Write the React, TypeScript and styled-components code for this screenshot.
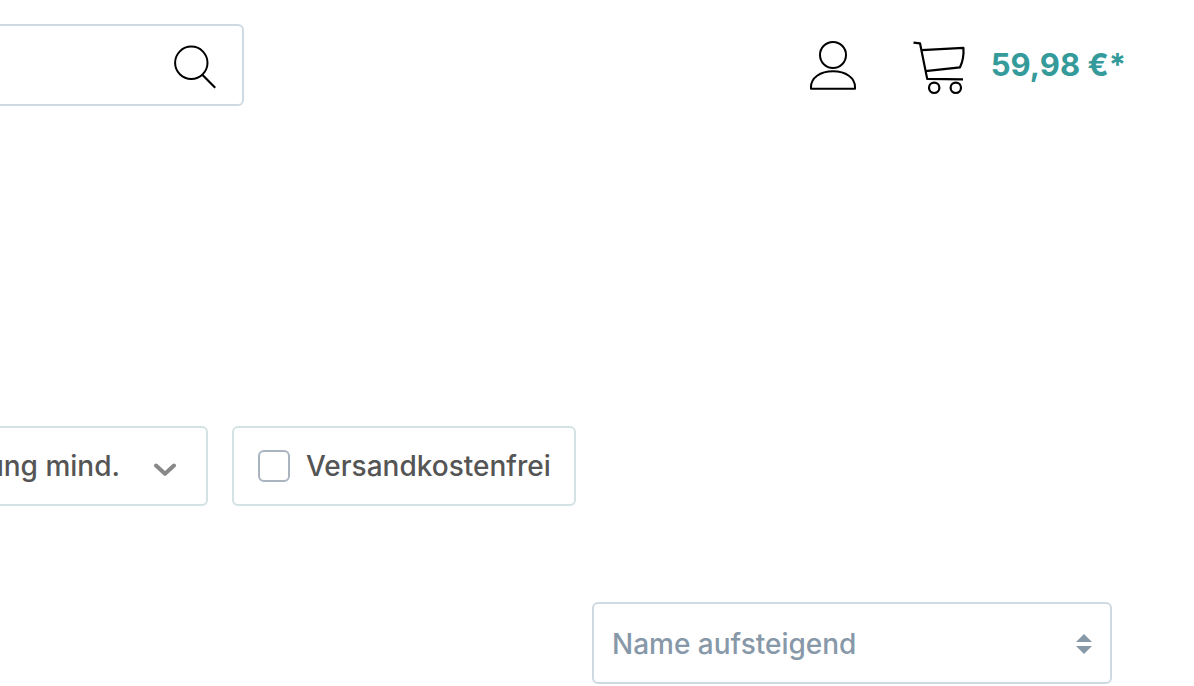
import React from "react";
import styled, { createGlobalStyle } from "styled-components";

const GlobalStyle = createGlobalStyle`
  *, *::before, *::after { box-sizing: border-box; }
  body {
    margin: 0;
    background: #fff;
    color: #555;
    font-family: Inter, "Liberation Sans", sans-serif;
    font-size: 28px;
    font-weight: 500;
    line-height: 40px;
  }
  button, input, select { font: inherit; color: inherit; }
`;

const Page = styled.div`
  overflow-x: hidden;
`;

const Header = styled.header`
  display: flex;
  justify-content: space-between;
  align-items: center;
  padding: 24px 68px 0 0;
`;

const SearchForm = styled.form`
  display: flex;
  align-items: center;
  width: 244px;
  height: 82px;
  border: 2px solid #cfd9e2;
  border-left: 0;
  border-radius: 0 6px 6px 0;
`;

const SearchInput = styled.input`
  flex: 1;
  min-width: 0;
  height: 100%;
  padding: 0 16px;
  border: 0;
  background: transparent;
  outline: none;
`;

const IconButton = styled.button`
  display: flex;
  padding: 0;
  border: 0;
  background: transparent;
  color: #000;
  cursor: pointer;
`;

const SearchButton = styled(IconButton)`
  margin-right: 24px;
`;

const Actions = styled.nav`
  display: flex;
  align-items: center;
  gap: 54px;
`;

const ActionLink = styled.a`
  display: flex;
  align-items: center;
  gap: 24px;
  color: #000;
  text-decoration: none;
`;

const Price = styled.span`
  color: #349a9a;
  font-size: 31px;
  font-weight: 700;
  white-space: nowrap;
`;

const Filters = styled.section`
  display: flex;
  gap: 24px;
  padding-top: 320px;
`;

const FilterButton = styled.button`
  display: flex;
  justify-content: flex-end;
  align-items: center;
  gap: 32px;
  width: 208px;
  height: 80px;
  padding: 0 30px 0 0;
  overflow: hidden;
  border: 2px solid #d3e2e2;
  border-left: 0;
  border-radius: 0 6px 6px 0;
  background: #fff;
  white-space: nowrap;
  cursor: pointer;

  svg { flex: none; }
`;

const FilterCheck = styled.label`
  display: flex;
  align-items: center;
  gap: 16px;
  height: 80px;
  padding: 0 23px 0 24px;
  border: 2px solid #d3e2e2;
  border-radius: 6px;
  cursor: pointer;
`;

const Checkbox = styled.input`
  appearance: none;
  width: 32px;
  height: 32px;
  margin: 0;
  border: 2px solid #a9b4c0;
  border-radius: 6px;
  background: #fff;
  &:checked { background: #349a9a; }
`;

const SortBar = styled.section`
  display: flex;
  justify-content: flex-end;
  padding: 96px 82px 0 0;
`;

const SelectWrap = styled.div`
  position: relative;
  width: 520px;
  color: #8798a9;
`;

const SortSelect = styled.select`
  appearance: none;
  display: block;
  width: 100%;
  height: 82px;
  padding: 2px 56px 0 18px;
  border: 2px solid #cfd9e2;
  border-radius: 6px;
  background: #fff;
`;

const SelectArrows = styled.svg`
  position: absolute;
  top: 32px;
  right: 20px;
  pointer-events: none;
`;

const SearchIcon = () => (
  <svg width="48" height="48" viewBox="0 0 48 48" fill="none" stroke="currentColor" strokeWidth="2" aria-hidden="true">
    <circle cx="21.3" cy="21.8" r="16.2" />
    <path d="M32.3 33.7 45.2 46.7" strokeWidth="2.2" />
  </svg>
);

const UserIcon = () => (
  <svg width="48" height="56" viewBox="0 0 48 56" fill="none" stroke="currentColor" strokeWidth="2" aria-hidden="true">
    <circle cx="24" cy="18" r="13" />
    <path d="M2 51.7V50C2 41 11 34.3 24 34.3S46 41 46 50V51.7Z" strokeLinejoin="round" />
  </svg>
);

const CartIcon = () => (
  <svg width="56" height="60" viewBox="0 -2 56 60" fill="none" stroke="currentColor" strokeWidth="2.2" strokeLinejoin="round" aria-hidden="true">
    <path d="M2.5 5.6 9 6.3 16.2 41.9 52 42.4" />
    <path d="M10.6 13.2 52.4 10.8C53 18 51.5 25 49 30.3L14.4 34.2" />
    <circle cx="23.2" cy="50.8" r="5.2" />
    <circle cx="44.8" cy="50.8" r="5.2" />
  </svg>
);

const ChevronIcon = () => (
  <svg width="24" height="24" viewBox="0 0 24 24" fill="none" stroke="#888" strokeWidth="4" strokeLinecap="round" strokeLinejoin="round" aria-hidden="true">
    <path d="M4 11.5 13 19.8 22 11.5" />
  </svg>
);

export default function App() {
  return (
    <Page>
      <GlobalStyle />
      <Header>
        <SearchForm role="search" onSubmit={(e) => e.preventDefault()}>
          <SearchInput type="search" aria-label="Suche" />
          <SearchButton type="submit" aria-label="Suchen">
            <SearchIcon />
          </SearchButton>
        </SearchForm>
        <Actions>
          <ActionLink href="#konto" aria-label="Mein Konto">
            <UserIcon />
          </ActionLink>
          <ActionLink href="#warenkorb">
            <CartIcon />
            <Price>59,98 €*</Price>
          </ActionLink>
        </Actions>
      </Header>
      <main>
        <Filters>
          <FilterButton type="button">
            ung mind.
            <ChevronIcon />
          </FilterButton>
          <FilterCheck>
            <Checkbox type="checkbox" />
            Versandkostenfrei
          </FilterCheck>
        </Filters>
        <SortBar>
          <SelectWrap>
            <SortSelect aria-label="Sortierung" defaultValue="name-asc">
              <option value="name-asc">Name aufsteigend</option>
            </SortSelect>
            <SelectArrows width="16" height="20" viewBox="0 0 16 20" fill="currentColor" aria-hidden="true">
              <path d="M0 8 8 0 16 8ZM0 12H16L8 20Z" />
            </SelectArrows>
          </SelectWrap>
        </SortBar>
      </main>
    </Page>
  );
}
